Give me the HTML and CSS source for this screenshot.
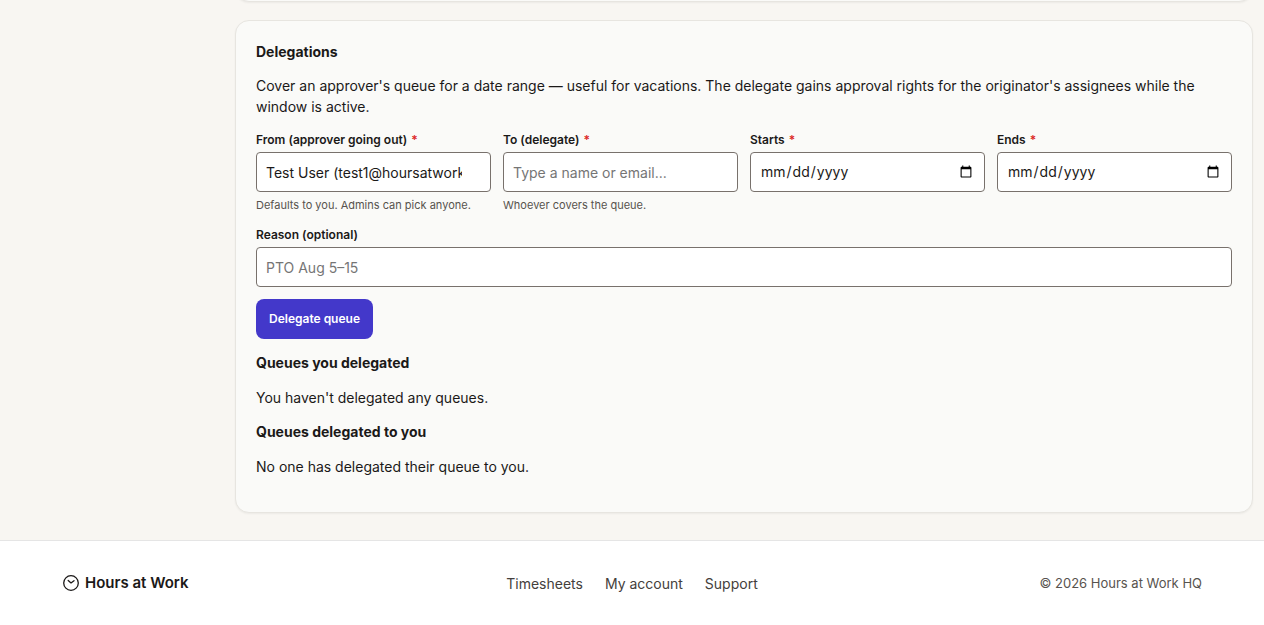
FILE: index.html
```html
<!DOCTYPE html>
<html lang="en">
<head>
<meta charset="utf-8">
<meta name="viewport" content="width=device-width, initial-scale=1">
<title>Delegations – Hours at Work</title>
<link rel="stylesheet" href="styles.css">
</head>
<body>
<main class="main">
  <div class="card card-previous"></div>
  <section class="card" aria-labelledby="delegations-title">
    <h2 class="card-title" id="delegations-title">Delegations</h2>
    <p class="intro">Cover an approver's queue for a date range — useful for vacations. The delegate gains approval rights for the originator's assignees while the window is active.</p>
    <form class="form">
      <div class="fields">
        <div class="field">
          <label for="from">From (approver going out) <span class="required">*</span></label>
          <input class="input input-picker" id="from" type="text" value="Test User (test1@hoursatwork.com)">
          <p class="hint">Defaults to you. Admins can pick anyone.</p>
        </div>
        <div class="field">
          <label for="to">To (delegate) <span class="required">*</span></label>
          <input class="input input-picker" id="to" type="text" placeholder="Type a name or email...">
          <p class="hint">Whoever covers the queue.</p>
        </div>
        <div class="field">
          <label for="starts">Starts <span class="required">*</span></label>
          <input class="input" id="starts" type="date">
        </div>
        <div class="field">
          <label for="ends">Ends <span class="required">*</span></label>
          <input class="input" id="ends" type="date">
        </div>
      </div>
      <div class="field">
        <label for="reason">Reason (optional)</label>
        <input class="input" id="reason" type="text" placeholder="PTO Aug 5–15">
      </div>
      <button class="button" type="button">Delegate queue</button>
    </form>
    <h3 class="subtitle">Queues you delegated</h3>
    <p class="empty">You haven't delegated any queues.</p>
    <h3 class="subtitle">Queues delegated to you</h3>
    <p class="empty">No one has delegated their queue to you.</p>
  </section>
</main>
<footer class="footer">
  <div class="footer-inner">
    <a class="brand" href="#">
      <svg class="brand-icon" viewBox="0 0 18 18" aria-hidden="true"><circle cx="9" cy="9" r="7.300"/><path d="M6.200 6.400L9 8.900l3-2.200"/></svg>
      Hours at Work
    </a>
    <nav class="links" aria-label="Footer">
      <a href="#">Timesheets</a>
      <a href="#">My account</a>
      <a href="#">Support</a>
    </nav>
    <p class="copyright">© 2026 Hours at Work HQ</p>
  </div>
</footer>
</body>
</html>
```

FILE: styles.css
```css
* { box-sizing: border-box; }
body {
  margin: 0;
  background: #f8f6f2;
  color: #1b1918;
  font-family: Inter, sans-serif;
  font-size: 14px;
  line-height: 21px;
}
h2, h3, p { margin: 0; }
a { color: inherit; text-decoration: none; }
.main {
  display: flex;
  flex-direction: column;
  gap: 18px;
  padding: 0 11px 27px 235px;
}
.card {
  padding: 20px 20px 35px;
  background: #fafaf8;
  border: 1px solid #e7e5e0;
  border-radius: 14px;
  box-shadow: 0 1px 2px rgb(0 0 0 / 5%);
}
.card-previous {
  height: 40px;
  margin-top: -38px;
  padding: 0;
}
.card-title {
  font-size: 14px;
  line-height: 21px;
  font-weight: 700;
}
.intro { margin-top: 13px; }
.form { display: grid; gap: 12px; margin-top: 14px; }
.fields {
  display: grid;
  grid-template-columns: repeat(4, minmax(0, 1fr));
  gap: 12px;
}
label {
  display: block;
  font-size: 12px;
  line-height: 18px;
  font-weight: 600;
}
.required { color: #dc2626; margin-left: 1px; }
.input {
  display: block;
  width: 100%;
  height: 40px;
  margin-top: 3px;
  padding: 8px 9px;
  background: #fff;
  color: #1b1918;
  border: 1px solid #78716c;
  border-radius: 4px;
  font: 14px/20px Inter, sans-serif;
}
.input::placeholder { color: #757575; }
.input-picker { padding-right: 28px; }
.hint {
  margin-top: 4px;
  color: #57534e;
  font-size: 11px;
  line-height: 18px;
}
.button {
  justify-self: start;
  height: 40px;
  padding: 0 13px;
  background: #4338ca;
  color: #fff;
  border: 0;
  border-radius: 8px;
  font: 600 12px/18px Inter, sans-serif;
}
.subtitle {
  margin-top: 13px;
  font-size: 14px;
  line-height: 21px;
  font-weight: 700;
}
.empty { margin-top: 14px; }
.footer {
  background: #fff;
  border-top: 1px solid #e5e5e5;
}
.footer-inner {
  display: grid;
  grid-template-columns: 1fr auto 1fr;
  align-items: center;
  max-width: 1140px;
  margin: 0 auto;
  padding: 30px 0;
}
.brand {
  display: flex;
  align-items: center;
  gap: 5px;
  font-size: 15px;
  line-height: 24px;
  font-weight: 600;
}
.brand-icon {
  width: 18px;
  height: 18px;
  fill: none;
  stroke: currentColor;
  stroke-width: 1.3;
  stroke-linecap: round;
  stroke-linejoin: round;
}
.links { display: flex; gap: 22px; color: #44403c; }
.copyright {
  color: #57534e;
  font-size: 13px;
  text-align: right;
}
```
